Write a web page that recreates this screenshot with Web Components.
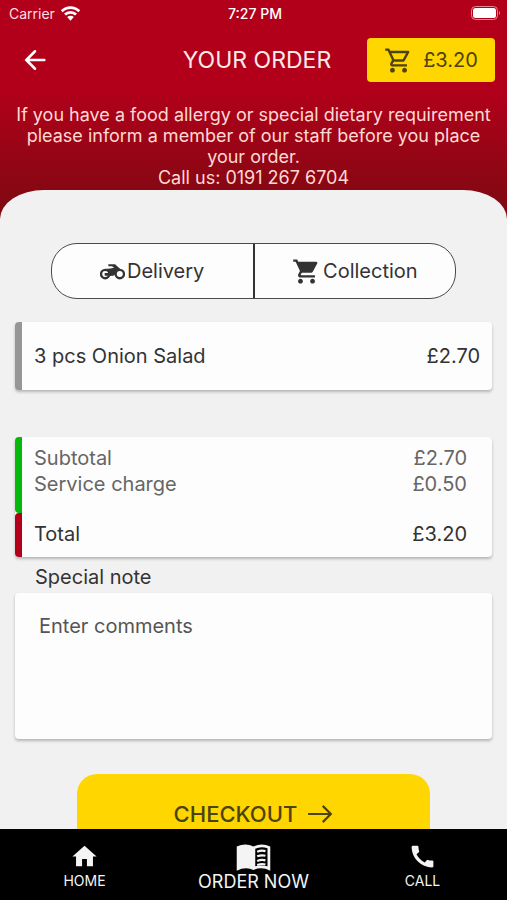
<!DOCTYPE html>
<html lang="en">
<head>
<meta charset="utf-8">
<meta name="viewport" content="width=device-width, initial-scale=1">
<title>Your order</title>
<style>
html, body { margin: 0; height: 100%; }
body { font-family: Inter, "Liberation Sans", sans-serif; background: #f1f1f1; color: #3a3a3a; }
</style>
</head>
<body>
<order-app></order-app>
<script>
const ICONS = {
  back: '<path d="M4.500 12H20M12 4.500L4.500 12L12 19.500" fill="none" stroke="currentColor" stroke-width="2.200" stroke-linecap="round"/>',
  cartOutline: '<path d="M15.55 13c.75 0 1.41-.41 1.75-1.03l3.58-6.49A.996.996 0 0 0 20.01 4H5.21l-.94-2H1v2h2l3.6 7.59-1.35 2.44C4.52 15.37 5.48 17 7 17h12v-2H7l1.1-2h7.45zM6.16 6h12.15l-2.76 5H8.53L6.16 6zM7 18c-1.1 0-1.99.9-1.99 2S5.9 22 7 22s2-.9 2-2-.9-2-2-2zm10 0c-1.1 0-1.99.9-1.99 2s.89 2 1.99 2 2-.9 2-2-.9-2-2-2z"/>',
  cart: '<path d="M7 18c-1.1 0-1.99.9-1.99 2S5.9 22 7 22s2-.9 2-2-.9-2-2-2zM1 2v2h2l3.6 7.59-1.35 2.45c-.16.28-.25.61-.25.96 0 1.1.9 2 2 2h12v-2H7.42c-.14 0-.25-.11-.25-.25l.03-.12.9-1.63h7.45c.75 0 1.41-.41 1.75-1.03l3.58-6.49A1 1 0 0 0 20 4H5.21l-.94-2H1zm16 16c-1.1 0-1.99.9-1.99 2s.89 2 1.99 2 2-.9 2-2-.9-2-2-2z"/>',
  bike: '<path d="M8 5h6.500l1.500 1.500 4 3.500-2 1-5 5H9l-5-6.500 6-.5 3.500-.5L11.500 7H8z"/><g fill="#fdfdfd" stroke="currentColor" stroke-width="2.200"><circle cx="5" cy="14.500" r="4"/><circle cx="19" cy="14.500" r="4"/></g><path d="M4.500 13.500H11V16H4.500z"/>',
  home: '<path d="M10 20v-6h4v6h5v-8h3L12 3 2 12h3v8z"/>',
  phone: '<path d="M20.01 15.38c-1.23 0-2.42-.2-3.53-.56a.98.98 0 0 0-1.01.24l-1.57 1.97c-2.83-1.35-5.48-3.9-6.89-6.83l1.95-1.66c.27-.28.35-.67.24-1.02-.37-1.11-.56-2.3-.56-3.53 0-.54-.45-.99-.99-.99H4.19C3.65 3 3 3.24 3 3.99 3 13.28 10.73 21 20.01 21c.71 0 .99-.63.99-1.18v-3.45c0-.54-.45-.99-.99-.99z"/>',
  arrow: '<path d="M1 12H22M14.500 4.500L22 12L14.500 19.500" fill="none" stroke="currentColor" stroke-width="2"/>',
  wifi: '<path d="M1 9.200a15.600 15.600 0 0 1 22 0M5 13.400a10 10 0 0 1 14 0" fill="none" stroke="currentColor" stroke-width="3.500"/><path d="M7.800 16.400a6 6 0 0 1 8.400 0L12 21z"/>',
  book: '<path d="M.5 4.500Q6.500 1.500 12 4.500Q17.500 1.500 23.500 4.500V21Q17.500 18 12 20.500Q6.500 18 .5 21z"/><path d="M13.200 6Q17 4 21.600 5.600V18Q17 16.800 13.200 18z" fill="#000"/><path d="M14.500 8q3-1.200 5.700-.4M14.500 11.200q3-1.200 5.700-.4M14.500 14.400q3-1.200 5.700-.4M14.500 17.200q3-1 5.700-.4" fill="none" stroke="currentColor" stroke-width="1.500"/>'
};
class BaseElement extends HTMLElement {
  constructor() {
    super();
    this.attachShadow({ mode: "open" });
  }
  connectedCallback() {
    this.shadowRoot.innerHTML = "<style>*{box-sizing:border-box}" + this.css + "</style>" + this.html;
  }
}
const define = (name, css, html) => customElements.define(name, class extends BaseElement {
  get css() { return css; }
  get html() { return typeof html === "function" ? html(this) : html; }
});

define("ui-icon", ":host{display:inline-flex;flex:none;width:var(--size,24px);height:var(--size,24px)}svg{width:100%;height:100%;fill:currentColor}",
  el => `<svg viewBox="0 0 24 24" aria-hidden="true">${ICONS[el.getAttribute("name")]}</svg>`);

define("status-bar", `
  :host{display:grid;grid-template-columns:1fr auto 1fr;align-items:center;height:27px;padding:0 6px 0 9px;font-size:14px;line-height:20px;color:#fff}
  .left{display:flex;align-items:center;gap:6px;color:#ffdfe0}
  .left ui-icon{--size:19px;color:#fff}
  .time{font-weight:500}
  svg{justify-self:end}`, `
  <span class="left">Carrier <ui-icon name="wifi"></ui-icon></span>
  <span class="time">7:27 PM</span>
  <svg width="30" height="15" viewBox="0 0 30 15" aria-hidden="true"><rect x=".5" y=".5" width="26" height="13" rx="4" fill="none" stroke="#e08b92"/><rect x="2" y="2" width="23" height="10" rx="2.500" fill="#fff"/><path d="M28 5q2 2 0 4z" fill="#e08b92"/></svg>`);

define("order-header", `
  :host{display:block;background:linear-gradient(#b2001b 0,#b2001b 90px,#7c0a10 216px);padding-bottom:42px;color:#fff}
  .bar{display:grid;grid-template-columns:1fr auto 1fr;align-items:center;padding:11px 12px 0 19px;height:55px}
  button{font:inherit;border:0;cursor:pointer}
  .back{justify-self:start;background:none;color:#fff;padding:2px;display:flex}
  .back ui-icon{--size:28px}
  h1{margin:0;font-size:23px;line-height:28px;font-weight:400;color:#ffe9e9}
  .basket{justify-self:end;display:flex;align-items:center;justify-content:center;gap:10px;width:128px;height:44px;background:#ffd600;color:#4d430e;border-radius:4px;font-size:20px;padding:0}
  .basket ui-icon{--size:29px}
  p{margin:0;padding:22px 8px 0;text-align:center;font-size:18px;line-height:21px;color:#ffd9d3}`, `
  <status-bar></status-bar>
  <div class="bar">
    <button class="back" aria-label="Back"><ui-icon name="back"></ui-icon></button>
    <h1>YOUR ORDER</h1>
    <button class="basket"><ui-icon name="cartOutline"></ui-icon><span>£3.20</span></button>
  </div>
  <p>If you have a food allergy or special dietary requirement please inform a member of our staff before you place your order.<br>Call us: 0191 267 6704</p>`);

define("order-mode", `
  :host{display:flex;width:85%;height:56px;margin:0 auto;border:1px solid #4a4a4a;border-radius:26px;overflow:hidden;background:#fdfdfd}
  button{flex:1;display:flex;align-items:center;justify-content:center;gap:2px;border:0;background:none;color:#333;font:inherit;font-size:20px;padding:0;cursor:pointer}
  button + button{border-left:2px solid #333}`, `
  <button><ui-icon name="bike" style="--size:25px"></ui-icon>Delivery</button>
  <button><ui-icon name="cart" style="--size:29px"></ui-icon>Collection</button>`);

define("ui-card", `
  :host{display:block;background:#fdfdfd;border-radius:4px;box-shadow:0 2px 3px rgba(0,0,0,.25)}`, `<slot></slot>`);

define("price-row", `
  :host{display:flex;justify-content:space-between;align-items:center;font-size:20px;line-height:26px}`, `
  <slot></slot><slot name="price"></slot>`);

define("order-summary", `
  :host{display:block}
  section{border-left:7px solid;border-radius:4px;padding:0 25px 0 12px}
  .costs{border-color:#06b80b;padding-top:8px;height:76px}
  .costs price-row{color:#666}
  .total{border-color:#b2001b;height:44px;padding-top:8px}
  .total price-row{color:#333}`, `
  <ui-card>
    <section class="costs">
      <price-row>Subtotal<span slot="price">£2.70</span></price-row>
      <price-row>Service charge<span slot="price">£0.50</span></price-row>
    </section>
    <section class="total"><price-row>Total<span slot="price">£3.20</span></price-row></section>
  </ui-card>`);

define("order-note", `
  :host{display:block}
  label{display:block;padding:7px 20px 3px;font-size:20px;line-height:26px;color:#333}
  textarea{display:block;width:100%;height:146px;border:0;resize:none;border-radius:4px;background:transparent;padding:20px 24px;font:inherit;font-size:20px;line-height:26px;outline-offset:-2px}
  textarea::placeholder{color:#555;opacity:1}`, `
  <label for="note">Special note</label>
  <ui-card><textarea id="note" placeholder="Enter comments"></textarea></ui-card>`);

define("bottom-nav", `
  :host{display:block;background:#000;color:#f4f4f4}
  nav{display:grid;grid-template-columns:1fr 1fr 1fr;padding-top:13px;height:71px}
  a{display:flex;flex-direction:column;align-items:center;color:inherit;text-decoration:none;font-size:14px;line-height:20px;white-space:nowrap}
  a ui-icon{--size:29px}
  .main{font-size:18px}
  .main ui-icon{--size:35px;margin:-2px 0 -3px}`, `
  <nav aria-label="Main">
    <a href="#home"><ui-icon name="home"></ui-icon>HOME</a>
    <a class="main" href="#order"><ui-icon name="book"></ui-icon>ORDER NOW</a>
    <a href="#call"><ui-icon name="phone"></ui-icon>CALL</a>
  </nav>`);

define("order-app", `
  :host{display:flex;flex-direction:column;height:100vh;overflow:hidden}
  main{flex:1;min-height:0;overflow:auto;scrollbar-width:none}
  .panel{margin-top:-40px;background:#f1f1f1;border-radius:44px 44px 0 0 / 29px 29px 0 0;padding:53px 15px 24px;position:relative}
  .item{margin-top:23px;border-left:7px solid #969696;padding:21px 12px;color:#333}
  order-summary{margin-top:47px}
  .checkout{display:flex;align-items:center;justify-content:center;gap:10px;width:74%;height:80px;margin:35px auto 0;border:0;border-radius:20px;background:#ffd600;color:#4d430e;font:inherit;font-size:22px;font-weight:500;cursor:pointer}
  .checkout ui-icon{--size:26px}`, `
  <main>
    <order-header></order-header>
    <div class="panel">
      <order-mode></order-mode>
      <ui-card class="item"><price-row>3 pcs Onion Salad<span slot="price">£2.70</span></price-row></ui-card>
      <order-summary></order-summary>
      <order-note></order-note>
      <button class="checkout">CHECKOUT <ui-icon name="arrow"></ui-icon></button>
    </div>
  </main>
  <bottom-nav></bottom-nav>`);
</script>
</body>
</html>
